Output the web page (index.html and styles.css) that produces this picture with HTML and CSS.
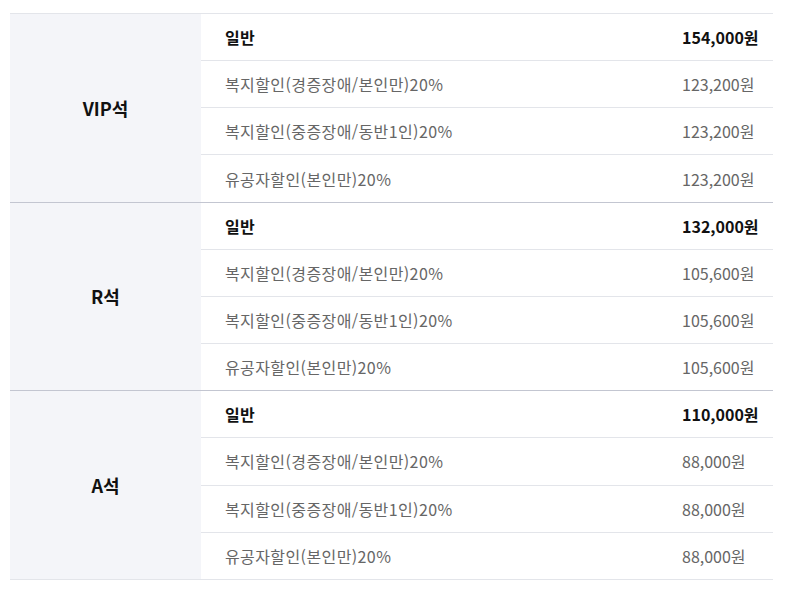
FILE: index.html
```html
<!DOCTYPE html>
<html lang="ko">
<head>
<meta charset="utf-8">
<link rel="stylesheet" href="styles.css">
</head>
<body>
<div class="wrap">
<table class="price">
<colgroup><col class="c-seat"><col class="c-name"><col class="c-amt"></colgroup>
<tbody class="grp">
<tr><th rowspan="4" class="seat">VIP석</th><td class="name strong">일반</td><td class="amt strong">154,000원</td></tr>
<tr><td class="name">복지할인(경증장애/본인만)20%</td><td class="amt">123,200원</td></tr>
<tr><td class="name">복지할인(중증장애/동반1인)20%</td><td class="amt">123,200원</td></tr>
<tr><td class="name">유공자할인(본인만)20%</td><td class="amt">123,200원</td></tr>
</tbody>
<tbody class="grp">
<tr><th rowspan="4" class="seat">R석</th><td class="name strong">일반</td><td class="amt strong">132,000원</td></tr>
<tr><td class="name">복지할인(경증장애/본인만)20%</td><td class="amt">105,600원</td></tr>
<tr><td class="name">복지할인(중증장애/동반1인)20%</td><td class="amt">105,600원</td></tr>
<tr><td class="name">유공자할인(본인만)20%</td><td class="amt">105,600원</td></tr>
</tbody>
<tbody class="grp last">
<tr><th rowspan="4" class="seat">A석</th><td class="name strong">일반</td><td class="amt strong">110,000원</td></tr>
<tr><td class="name">복지할인(경증장애/본인만)20%</td><td class="amt">88,000원</td></tr>
<tr><td class="name">복지할인(중증장애/동반1인)20%</td><td class="amt">88,000원</td></tr>
<tr><td class="name">유공자할인(본인만)20%</td><td class="amt">88,000원</td></tr>
</tbody>
</table>
</div>
</body>
</html>
```

FILE: styles.css
```css
html, body {
  margin: 0;
  padding: 0;
  background: #ffffff;
}
body {
  font-family: "Noto Sans CJK KR", "Noto Sans", sans-serif;
  font-size: 16px;
  color: #666666;
}
.wrap {
  padding: 13px 22px 0 10px;
}
.price {
  width: 763px;
  border-collapse: collapse;
  table-layout: fixed;
  border-top: 1px solid #e3e5ea;
  border-bottom: 1px solid #e3e5ea;
}
.c-seat { width: 191px; }
.c-amt { width: 113px; }
.grp + .grp tr:first-child th {
  border-top: 1px solid #c3c6d1;
}
.seat {
  background: #f4f5f9;
  color: #111111;
  font-weight: 700;
  font-size: 18px;
  text-align: center;
  vertical-align: middle;
  padding: 0;
}
.name, .amt {
  height: 46.17px;
  padding: 0;
  border-top: 1px solid #e3e5ea;
  vertical-align: middle;
  white-space: nowrap;
  line-height: 20px;
}
tr:first-child .name, tr:first-child .amt {
  border-top: none;
}
.grp + .grp tr:first-child .name,
.grp + .grp tr:first-child .amt {
  border-top: 1px solid #c3c6d1;
}
.name {
  padding-left: 24px;
  text-align: left;
  letter-spacing: 0.4px;
}
.amt {
  padding-left: 22px;
  text-align: left;
}
.strong {
  color: #111111;
  font-weight: 700;
}
```
